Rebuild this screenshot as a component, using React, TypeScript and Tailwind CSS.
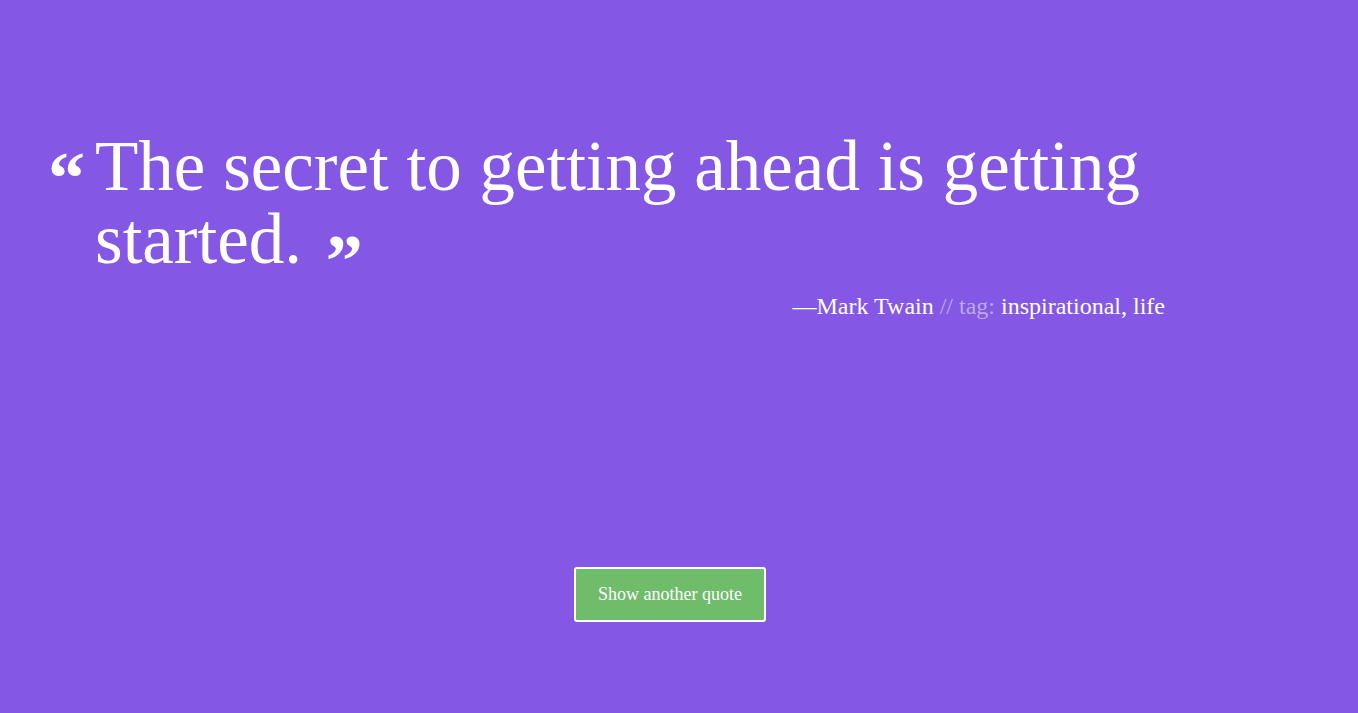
import React from "react";

export default function App() {
  return (
    <div className="min-h-[713px] w-full bg-[#8458e4] flex flex-col" style={{ fontFamily: '"Liberation Serif", "DejaVu Serif", serif' }}>
      <div className="pl-[48px] pr-[193px] pt-[131px]">
        <div className="flex items-start">
          <span className="w-[47px] shrink-0 mt-[12px] text-[74px] leading-[70px] font-bold text-white">&ldquo;</span>
          <p className="text-[71px] leading-[70px] text-white">
            The secret to getting ahead is getting started.{" "}
            <span className="inline-block ml-[6px] translate-y-[23px] text-[74px] leading-none font-bold">&rdquo;</span>
          </p>
        </div>
        <p className="mt-[17px] text-right text-[24px] leading-[28px] text-white">
          &mdash;Mark Twain <span className="text-[#bcaae6]">// tag:</span> inspirational, life
        </p>
      </div>
      <div className="flex justify-center pt-[247px]">
        <button className="w-[192px] h-[55px] rounded-[3px] border-2 border-white bg-[#6fbc6b] text-white text-[18px] ml-[-18px]">
          Show another quote
        </button>
      </div>
    </div>
  );
}
